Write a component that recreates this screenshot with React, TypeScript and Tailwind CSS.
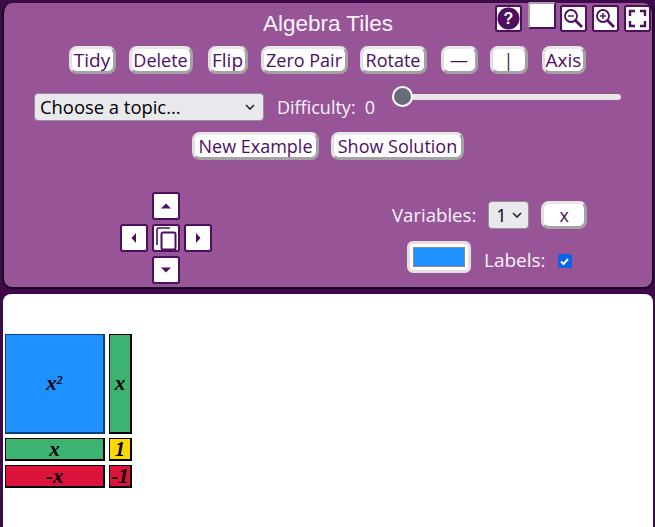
const btn =
  'h-[28px] rounded-[8px] border-[3px] border-[#a3a3a3] border-t-[#e8e8e8] border-l-[#e0e0e0] bg-white text-[#4d0f5e] flex items-center justify-center leading-none';

function Btn({ label, className }: { label: string; className: string }) {
  return <button className={`${btn} ${className}`}>{label}</button>;
}

function IconBox({ children, className = '' }: { children: React.ReactNode; className?: string }) {
  return (
    <div className={`w-[27px] h-[27px] bg-white rounded-[3px] border-2 border-[#4d0f5e] flex items-center justify-center ${className}`}>
      {children}
    </div>
  );
}

function Magnifier({ plus }: { plus?: boolean }) {
  return (
    <svg width="21" height="21" viewBox="0 0 21 21" fill="none" stroke="#4d0f5e" strokeWidth="1.8">
      <circle cx="8" cy="8" r="6" />
      <path d="M12.5 12.5 L19 19" strokeWidth="2.6" />
      <path d="M5 8 H11" strokeWidth="1.4" />
      {plus && <path d="M8 5 V11" strokeWidth="1.4" />}
    </svg>
  );
}

function Arrow({ d }: { d: string }) {
  return (
    <svg width="12" height="12" viewBox="0 0 12 12">
      <path d={d} fill="#4d0f5e" />
    </svg>
  );
}

function Tile({ className, children }: { className: string; children: React.ReactNode }) {
  return (
    <div
      className={`border border-r-2 border-b-2 flex items-center justify-center font-bold italic text-[21px] leading-none text-black ${className}`}
      style={{ fontFamily: '"Liberation Serif", serif' }}
    >
      {children}
    </div>
  );
}

export default function App() {
  return (
    <div
      className="w-[655px] h-[527px] overflow-hidden bg-[#3d0a4a] text-[18px] pt-[3px]"
      style={{ fontFamily: '"Open Sans", sans-serif' }}
    >
      {/* Controls panel */}
      <div className="relative ml-[2px] mr-[1px] h-[286px] bg-[#975597] rounded-[10px] border-x-2 border-b-2 border-[#1c0522] flex flex-col items-center">
        <div className="absolute right-[1px] top-[2px] flex items-start gap-[5px]">
          <IconBox className="mr-[1px]">
            <svg width="23" height="23" viewBox="0 0 23 23">
              <circle cx="11.5" cy="11.5" r="11" fill="#4d0f5e" />
              <text x="11.5" y="17" textAnchor="middle" fontSize="16" fontWeight="700" fill="#fff" fontFamily="Liberation Sans">?</text>
            </svg>
          </IconBox>
          <div className="w-[28px] h-[27px] bg-white rounded-[2px] border-2 border-[#4d0f5e] border-t-[#a3a3a3] border-l-[#a3a3a3] -mt-[3px]" />
          <IconBox className="-ml-[1px]"><Magnifier /></IconBox>
          <IconBox><Magnifier plus /></IconBox>
          <IconBox>
            <svg width="19" height="19" viewBox="0 0 19 19" fill="none" stroke="#4d0f5e" strokeWidth="2.4">
              <path d="M2 7 V2 H7 M12 2 H17 V7 M17 12 V17 H12 M7 17 H2 V12" />
            </svg>
          </IconBox>
        </div>

        <h1
          className="mt-[7px] h-[27px] text-[22.5px] leading-[27px] text-[#fbf3fb] font-normal"
          style={{ fontFamily: '"Liberation Sans", sans-serif' }}
        >
          Algebra Tiles
        </h1>

        <div className="mt-[9px] -ml-[2px] flex items-center">
          <Btn label="Tidy" className="w-[47px] text-[19px]" />
          <Btn label="Delete" className="ml-[13px] w-[64px]" />
          <Btn label="Flip" className="ml-[15px] w-[40px] text-[19px]" />
          <Btn label="Zero Pair" className="ml-[13px] w-[87px]" />
          <Btn label="Rotate" className="ml-[12px] w-[67px]" />
          <Btn label="—" className="ml-[14px] w-[37px]" />
          <Btn label="|" className="ml-[12px] w-[38px]" />
          <Btn label="Axis" className="ml-[14px] w-[44px] text-[19px]" />
        </div>

        <div className="mt-[19px] self-start ml-[30px] flex items-center h-[28px]">
          <div className="w-[230px] h-[28px] rounded-[4px] bg-[#e9e9ed] border border-[#8f8f9d] flex items-center justify-between pl-[5px] pr-[8px] text-black text-[18.4px]">
            <span>Choose a topic...</span>
            <svg width="10" height="6" viewBox="0 0 10 6" fill="none" stroke="#222" strokeWidth="1.6"><path d="M1 1 L5 5 L9 1" /></svg>
          </div>
          <span className="ml-[13px] text-[#fbf3fb]">Difficulty:</span>
          <span className="ml-[9px] text-[#fbf3fb]">0</span>
          <div className="relative ml-[17px] -mt-[20px] w-[229px] h-[6px] bg-[#e6e6e6] rounded-full">
            <div className="absolute left-0 -top-[8px] w-[21px] h-[21px] rounded-full bg-[#6b6b7b] border-[2px] border-white" />
          </div>
        </div>

        <div className="mt-[11px] flex items-center gap-[12px]">
          <Btn label="New Example" className="w-[127px]" />
          <Btn label="Show Solution" className="w-[133px]" />
        </div>

        <div className="mt-[32px] w-full flex">
          <div className="ml-[116px] grid grid-cols-[28px_28px_28px] grid-rows-[28px_28px_28px] gap-[4px]">
            <IconBox className="col-start-2 w-[28px] h-[28px]"><Arrow d="M1 8.5 L6 3.5 L11 8.5 Z" /></IconBox>
            <IconBox className="col-start-1 row-start-2 w-[28px] h-[28px]"><Arrow d="M8 1 L3.5 6 L8 11 Z" /></IconBox>
            <IconBox className="col-start-2 row-start-2 w-[28px] h-[28px]">
              <svg width="24" height="24" viewBox="0 0 24 24" fill="none" stroke="#4d0f5e" strokeWidth="1.6">
                <rect x="7.5" y="6.5" width="14" height="17" rx="1.5" strokeWidth="2" />
                <path d="M3 19 V3.5 Q3 2 4.5 2 H16" />
              </svg>
            </IconBox>
            <IconBox className="col-start-3 row-start-2 w-[28px] h-[28px]"><Arrow d="M4 1 L8.5 6 L4 11 Z" /></IconBox>
            <IconBox className="col-start-2 row-start-3 w-[28px] h-[28px]"><Arrow d="M1 3.5 L6 8.5 L11 3.5 Z" /></IconBox>
          </div>

          <div className="ml-[180px] flex flex-col">
            <div className="flex items-center h-[28px] mt-[9px]">
              <span className="text-[#fbf3fb] text-[18.6px]">Variables:</span>
              <div className="ml-[12px] w-[41px] h-[28px] rounded-[4px] bg-[#e9e9ed] border border-[#8f8f9d] flex items-center justify-between pl-[7px] pr-[6px] text-black">
                <span>1</span>
                <svg width="10" height="6" viewBox="0 0 10 6" fill="none" stroke="#222" strokeWidth="1.6"><path d="M1 1 L5 5 L9 1" /></svg>
              </div>
              <Btn label="x" className="ml-[12px] w-[46px]" />
            </div>
            <div className="flex items-center mt-[11px] ml-[15px]">
              <div className="w-[64px] h-[32px] rounded-[6px] bg-white border-[3px] border-[#e0e0e0] p-[3px]">
                <div className="w-full h-full bg-[#1e90ff] border border-[#8a8a8a]" />
              </div>
              <span className="ml-[13px] mt-[6px] text-[#fbf3fb] text-[19px]">Labels:</span>
              <div className="ml-[12px] mt-[8px] w-[14px] h-[14px] rounded-[2px] bg-[#0b63e5] flex items-center justify-center">
                <svg width="11" height="11" viewBox="0 0 11 11" fill="none" stroke="#fff" strokeWidth="2"><path d="M2 5.5 L4.5 8 L9 3" /></svg>
              </div>
            </div>
          </div>
        </div>
      </div>

      {/* Tile canvas */}
      <div className="mt-[5px] ml-[3px] mr-[2px] h-[233px] bg-white rounded-t-[8px] pt-[40px] pl-[2px]">
        <div className="grid grid-cols-[100px_23px] grid-rows-[100px_23px_23px] gap-x-[4px] gap-y-[4px]">
          <Tile className="bg-[#1e90ff] border-[#0f3f78]"><span>x<sup className="text-[12px] top-[-6px]">2</sup></span></Tile>
          <Tile className="bg-[#3cb371] border-black">x</Tile>
          <Tile className="bg-[#3cb371] border-black">x</Tile>
          <Tile className="bg-[#ffd700] border-black">1</Tile>
          <Tile className="bg-[#dc143c] border-black">-x</Tile>
          <Tile className="bg-[#dc143c] border-black">-1</Tile>
        </div>
      </div>
    </div>
  );
}
